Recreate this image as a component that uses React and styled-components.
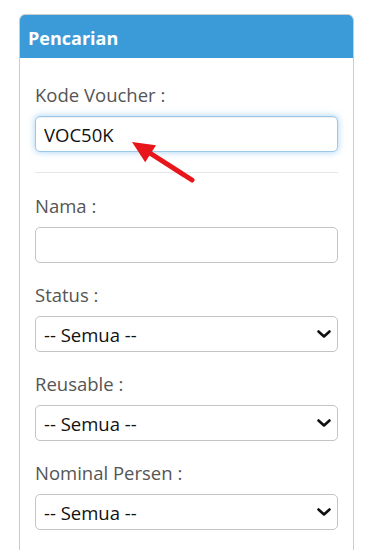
import React, { useState } from "react";
import styled, { createGlobalStyle } from "styled-components";

const GlobalStyle = createGlobalStyle`
  body {
    margin: 0;
    background: #fff;
    font-family: "Open Sans", "Noto Sans", sans-serif;
  }
`;

const Page = styled.div`
  padding: 14px 16px 0 19px;
  height: 550px;
  overflow: hidden;
  box-sizing: border-box;
`;

const Card = styled.div`
  border: 1px solid #cccccc;
  border-radius: 6px;
  overflow: hidden;
  background: #fff;
`;

const Header = styled.div`
  background: #3a9bd8;
  height: 44px;
  box-sizing: border-box;
  margin: -1px -1px 0;
  padding: 3px 9px 0;
  display: flex;
  align-items: center;
  color: #fff;
  font-size: 18px;
  font-weight: 700;
`;

const Body = styled.div`
  position: relative;
  padding: 25px 15px 40px;
`;

const Field = styled.div`
  margin-bottom: 20px;
`;

const Label = styled.label`
  display: block;
  font-size: 18.5px;
  line-height: 24px;
  color: #555;
  margin-bottom: 9px;
`;

const TextInput = styled.input`
  display: block;
  width: 100%;
  box-sizing: border-box;
  height: 36px;
  padding: 0 8px;
  font-family: inherit;
  font-size: 18.5px;
  color: #111;
  border-radius: 5px;
  border: 1px solid ${(p) => (p.$focus ? "#9cc8ea" : "#c4c4c4")};
  box-shadow: ${(p) =>
    p.$focus
      ? "inset 0 1px 1px rgba(0,0,0,.075), 0 0 7px rgba(102,175,233,.6)"
      : "none"};
  outline: none;
`;

const Divider = styled.hr`
  border: 0;
  border-top: 1px solid #e6e6e6;
  margin: 0 0 21px;
`;

const SelectWrap = styled.div`
  position: relative;
`;

const Select = styled.select`
  display: block;
  width: 100%;
  box-sizing: border-box;
  height: 36px;
  padding: 0 30px 0 8px;
  font-family: inherit;
  font-size: 18.5px;
  color: #111;
  background: #fff;
  border: 1px solid #c4c4c4;
  border-radius: 5px;
  appearance: none;
  outline: none;
`;

const Chevron = styled.svg`
  position: absolute;
  right: 7px;
  top: 14px;
  width: 14px;
  height: 8px;
  pointer-events: none;
`;

const Arrow = styled.svg`
  position: absolute;
  left: 105px;
  top: 77px;
  width: 75px;
  height: 52px;
  pointer-events: none;
`;

function SelectField({ label }) {
  return (
    <Field>
      <Label>{label} :</Label>
      <SelectWrap>
        <Select defaultValue="">
          <option value="">-- Semua --</option>
        </Select>
        <Chevron viewBox="0 0 14 8">
          <path
            d="M1.5 1.5 L7 6.5 L12.5 1.5"
            fill="none"
            stroke="#111"
            strokeWidth="2.6"
            strokeLinecap="round"
            strokeLinejoin="round"
          />
        </Chevron>
      </SelectWrap>
    </Field>
  );
}

export default function App() {
  const [kode, setKode] = useState("VOC50K");
  const [nama, setNama] = useState("");

  return (
    <Page>
      <GlobalStyle />
      <Card>
        <Header>Pencarian</Header>
        <Body>
          <Field>
            <Label>Kode Voucher :</Label>
            <TextInput
              $focus
              value={kode}
              onChange={(e) => setKode(e.target.value)}
            />
          </Field>
          <Divider />
          <Field>
            <Label>Nama :</Label>
            <TextInput value={nama} onChange={(e) => setNama(e.target.value)} />
          </Field>
          <SelectField label="Status" />
          <SelectField label="Reusable" />
          <SelectField label="Nominal Persen" />

          {/* pointer to the voucher code */}
          <Arrow viewBox="0 0 75 52">
            <line
              x1="24"
              y1="17.5"
              x2="67"
              y2="45"
              stroke="#e8151b"
              strokeWidth="5"
              strokeLinecap="round"
            />
            <polygon points="7,7 31,10.3 20.2,27.2" fill="#e8151b" />
          </Arrow>
        </Body>
      </Card>
    </Page>
  );
}
